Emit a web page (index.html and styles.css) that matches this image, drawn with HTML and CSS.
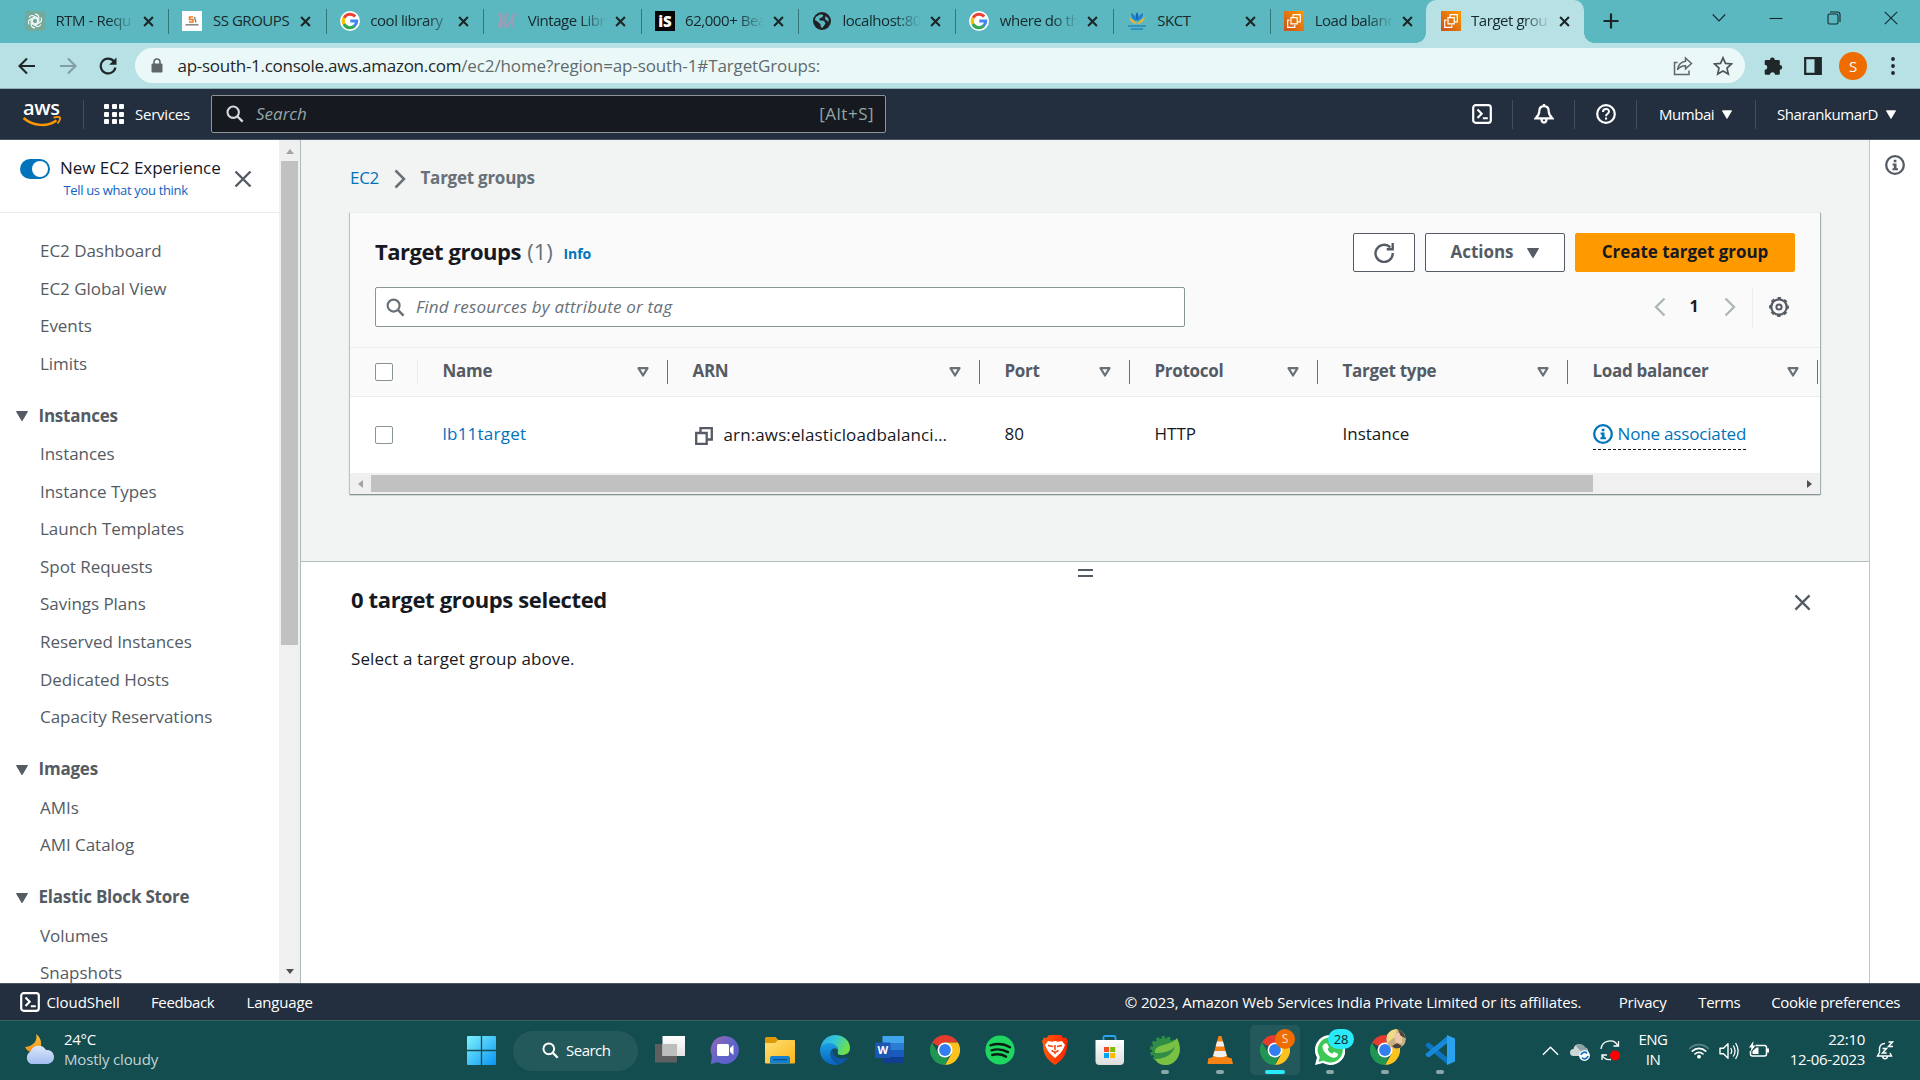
FILE: index.html
```
<!DOCTYPE html>
<html lang="en">
<head>
<meta charset="utf-8">
<title>Target groups | EC2</title>
<link rel="stylesheet" href="styles.css">
</head>
<body>
<svg class="defs" width="0" height="0">
  <defs>
    <linearGradient id="g-aws" x1="0" y1="1" x2="1" y2="0"><stop offset="0" stop-color="#c8511b"/><stop offset="1" stop-color="#f90"/></linearGradient>
    <linearGradient id="g-win" x1="0" y1="0" x2="1" y2="1"><stop offset="0" stop-color="#7df3fb"/><stop offset="1" stop-color="#0a94f5"/></linearGradient>
    <linearGradient id="g-chat" x1="0" y1="0" x2="1" y2="1"><stop offset="0" stop-color="#9a68b0"/><stop offset=".5" stop-color="#6264c9"/><stop offset="1" stop-color="#5b5bd0"/></linearGradient>
    <linearGradient id="g-folder" x1="0" y1="0" x2="1" y2="1"><stop offset="0" stop-color="#ffe07a"/><stop offset="1" stop-color="#f9b613"/></linearGradient>
    <linearGradient id="g-edge1" x1="0" y1="0" x2="1" y2=".4"><stop offset="0" stop-color="#2fa9ea"/><stop offset=".5" stop-color="#31c6d8"/><stop offset="1" stop-color="#6fe04c"/></linearGradient>
    <linearGradient id="g-edge2" x1="0" y1="0" x2="0" y2="1"><stop offset="0" stop-color="#1aa0e3"/><stop offset="1" stop-color="#0a63bd"/></linearGradient>
    <linearGradient id="g-brave" x1="0" y1="0" x2="1" y2="0"><stop offset="0" stop-color="#ff5a0a"/><stop offset="1" stop-color="#ff2400"/></linearGradient>
    <linearGradient id="g-bag" x1="0" y1="0" x2="0" y2="1"><stop offset="0" stop-color="#fff"/><stop offset="1" stop-color="#dcdcdc"/></linearGradient>
    <linearGradient id="g-moon" x1="0" y1="0" x2="0" y2="1"><stop offset="0" stop-color="#f8c53b"/><stop offset="1" stop-color="#ee8d20"/></linearGradient>
    <linearGradient id="g-cloud" x1="0" y1="0" x2="0" y2="1"><stop offset="0" stop-color="#dce8fb"/><stop offset="1" stop-color="#a3bdf0"/></linearGradient>
    <linearGradient id="g-white" x1="0" y1="0" x2="0" y2="1"><stop offset="0" stop-color="#fff"/><stop offset="1" stop-color="#e3e3e3"/></linearGradient>
    <symbol id="i-x" viewBox="0 0 10 10"><path d="M1 1l8 8M9 1L1 9" fill="none" stroke="currentColor" stroke-width="1.9"/></symbol>
    <symbol id="i-xbig" viewBox="0 0 18 18"><path d="M1.5 1.5l15 15M16.500 1.500L1.500 16.500" fill="none" stroke="currentColor" stroke-width="2.4"/></symbol>
    <symbol id="i-google" viewBox="0 0 20 20"><circle cx="10" cy="10" r="10" fill="#fff"/><g fill="none" stroke-width="3.100"><path d="M15.200 5.600A6.700 6.700 0 0 0 4.100 6.900" stroke="#ea4335"/><path d="M4.100 6.800A6.700 6.700 0 0 0 4.100 13.200" stroke="#fbbc05"/><path d="M4 13A6.700 6.700 0 0 0 14.500 15" stroke="#34a853"/><path d="M14.300 15.100A6.700 6.700 0 0 0 16.700 10H10.300" stroke="#4285f4"/></g></symbol>
    <symbol id="i-ec2" viewBox="0 0 20 20"><path d="M0 0h20v20H0z" fill="url(#g-aws)"/><g fill="none" stroke="#fff" stroke-width="1.200"><path d="M9 3.600h7.300v7.300h-2.600M9 3.600v2.500M7 6.600h6.200v6.200H7zM5.600 9.200H3.700v7.100h7.100v-2.300"/></g></symbol>
    <symbol id="i-search" viewBox="0 0 20 20"><circle cx="8" cy="8" r="6.300" fill="none" stroke="currentColor" stroke-width="2.300"/><path d="M12.500 12.500l6 6" stroke="currentColor" stroke-width="2.600"/></symbol>
    <symbol id="i-shell" viewBox="0 0 20 20"><rect x="1.200" y="1.200" width="17.600" height="17.600" rx="2.500" fill="none" stroke="currentColor" stroke-width="2.200"/><path d="M5.500 5.500l4.200 4.300-4.200 4.300M10.800 14.200h5" fill="none" stroke="currentColor" stroke-width="2.100"/></symbol>
    <symbol id="i-info" viewBox="0 0 20 20"><circle cx="10" cy="10" r="8.800" fill="none" stroke="currentColor" stroke-width="2.300"/><path d="M8.700 4.800h2.700v2.500H8.700zM7.600 8.600h3.900v4.700h1.500v1.900H7.400v-1.900h1.400v-2.800H7.600z" fill="currentColor"/></symbol>
    <symbol id="i-tri" viewBox="0 0 12 10"><path d="M.5.5h11L6 9.800z" fill="currentColor" stroke="currentColor" stroke-linejoin="round"/></symbol>
    <symbol id="i-sort" viewBox="0 0 12 10"><path d="M1.500 1.200h9L6 8.500z" fill="none" stroke="currentColor" stroke-width="2.200" stroke-linejoin="round"/></symbol>
    <symbol id="i-chrome" viewBox="0 0 30 30"><path d="M15 0A15 15 0 0 1 28 7.500H15L8.500 11.300 2 7.500A15 15 0 0 1 15 0z" fill="#e33b2e"/><path d="M28 7.500A15 15 0 0 1 15 30L21.500 18.800 15 7.500z" fill="#fcc31e"/><path d="M15 30A15 15 0 0 1 2 7.500L8.500 18.800 15 22.500l3.500-.5z" fill="#219653"/><circle cx="15" cy="15" r="7.500" fill="#fff"/><circle cx="15" cy="15" r="5.900" fill="#317ef0"/></symbol>
  </defs>
</svg>

<header class="tabstrip">
  <div class="tab"><svg class="fav" viewBox="0 0 20 20"><rect width="20" height="20" rx="3" fill="#74aa9c"/><g fill="none" stroke="#fff" stroke-width="1.100"><path id="petal" d="M10 3.200a3.400 3.400 0 0 1 3.800 3.300v4.300L10.300 13"/><use href="#petal" transform="rotate(60 10 10)"/><use href="#petal" transform="rotate(120 10 10)"/><use href="#petal" transform="rotate(180 10 10)"/><use href="#petal" transform="rotate(240 10 10)"/><use href="#petal" transform="rotate(300 10 10)"/></g></svg><span class="title fade">RTM - Requ</span><svg class="close"><use href="#i-x"/></svg></div>
  <div class="tab"><svg class="fav" viewBox="0 0 20 20"><path d="M0 0h20v20H0z" fill="#fff"/><path d="M11 6H7.500v2.500H11V11H7" fill="none" stroke="#f07b1d" stroke-width="1.500"/><path d="M12.500 6l1.500 5.500" stroke="#777" stroke-width="1.200"/><path d="M3.500 13.800h13" stroke="#8f8a85" stroke-width="1.600"/></svg><span class="title">SS GROUPS</span><svg class="close"><use href="#i-x"/></svg></div>
  <div class="tab"><svg class="fav"><use href="#i-google"/></svg><span class="title fade-soft">cool library</span><svg class="close"><use href="#i-x"/></svg></div>
  <div class="tab"><svg class="fav" viewBox="0 0 20 20"><path d="M2 3.500C5 2 5.500 4 3.500 9c-1 3-1.500 6-1 7.500C6 13 8 7 9.500 3 8 8 7 13 8.500 16.500 12 14 15 8 17.500 2.500c-2 5-3 10-1.500 13" fill="none" stroke="#9a9eb6" stroke-width="2.300" stroke-linecap="round" stroke-linejoin="round"/></svg><span class="title fade">Vintage Libr</span><svg class="close"><use href="#i-x"/></svg></div>
  <div class="tab"><svg class="fav" viewBox="0 0 20 20"><path d="M0 0h20v20H0z" fill="#050505"/><text x="10" y="16" text-anchor="middle" class="fav-is">iS</text></svg><span class="title fade">62,000+ Bea</span><svg class="close"><use href="#i-x"/></svg></div>
  <div class="tab"><svg class="fav" viewBox="0 0 20 20"><circle cx="10" cy="10" r="9" fill="#202124"/><path d="M4 5.500c2 .3 2-2 5-2.300l2.500 1L10 6.500l-2.500.8v2.200l4.500.3 1.500 2.700-3 4.300c-1.500.3-2-1.500-2-3.500L5.500 10.500 2.800 9z" fill="#5bb8c1"/><path d="M13.500 5l3 2.500v3.500l-3.500-3z" fill="#5bb8c1"/></svg><span class="title fade">localhost:80</span><svg class="close"><use href="#i-x"/></svg></div>
  <div class="tab"><svg class="fav"><use href="#i-google"/></svg><span class="title fade">where do th</span><svg class="close"><use href="#i-x"/></svg></div>
  <div class="tab"><svg class="fav" viewBox="0 0 20 20"><path d="M10 1c2 3 2 6 0 9-2-3-2-6 0-9z" fill="#1266b4"/><path d="M4 2c3 1 5 4 5.500 8C6 9 4 6 4 2zM16 2c-3 1-5 4-5.500 8C14 9 16 6 16 2z" fill="#1a80cf"/><path d="M2 6c1 4 4 7 8 7s7-3 8-7c-2 2-5 3-8 7-3-4-6-5-8-7z" fill="#f5b32b"/><path d="M1 15h18M4 18h12" stroke="#2487bb" stroke-width="1.600"/></svg><span class="title">SKCT</span><svg class="close"><use href="#i-x"/></svg></div>
  <div class="tab no-sep"><svg class="fav"><use href="#i-ec2"/></svg><span class="title fade">Load balanc</span><svg class="close"><use href="#i-x"/></svg></div>
  <div class="tab active"><svg class="fav"><use href="#i-ec2"/></svg><span class="title fade">Target grou</span><svg class="close"><use href="#i-x"/></svg></div>
  <svg class="new-tab" viewBox="0 0 16 16"><path d="M8 .5v15M.5 8h15" stroke="#1d2526" stroke-width="2.200"/></svg>
  <div class="win-controls">
    <svg viewBox="0 0 14 14"><path d="M.8 3.500L7 10l6.200-6.500"/></svg>
    <svg viewBox="0 0 14 14"><path d="M.5 7.500h13"/></svg>
    <svg viewBox="0 0 14 14"><rect x="1" y="3" width="10" height="10" rx="1.500"/><path d="M3 1h7.500a2.500 2.500 0 0 1 2.500 2.500V11"/></svg>
    <svg viewBox="0 0 14 14"><path d="M.8.800l12.400 12.400M13.200.800L.8 13.200"/></svg>
  </div>
</header>

<div class="toolbar">
  <svg class="nav-btn" viewBox="0 0 18 18"><path d="M17 9H2M9 1.500L1.500 9 9 16.500" fill="none" stroke="#1f2728" stroke-width="2.100"/></svg>
  <svg class="nav-btn" viewBox="0 0 18 18"><path d="M1 9h15M9 1.500L16.500 9 9 16.500" fill="none" stroke="#7f9fa3" stroke-width="2.100"/></svg>
  <svg class="nav-btn" viewBox="0 0 18 18"><path d="M15 4.500A7.400 7.400 0 1 0 16.400 10.500" fill="none" stroke="#1f2728" stroke-width="2.200"/><path d="M17.500.500v7.300h-7.300z" fill="#1f2728"/></svg>
  <div class="omnibox">
    <svg class="lock" viewBox="0 0 12 15"><path d="M3 6V4a3 3 0 0 1 6 0v2" fill="none" stroke="#5f6668" stroke-width="1.600"/><rect x=".5" y="5.500" width="11" height="9" rx="1.200" fill="#5f6668"/></svg>
    <span class="url"><span class="host">ap-south-1.console.aws.amazon.com</span>/ec2/home?region=ap-south-1#TargetGroups:</span>
    <svg class="omni-icon" viewBox="0 0 20 20"><path d="M4.500 6.500H1.500v12h14.500v-4M12.500 2l6 5.500-6 5.300v-3c-4 0-6 1.200-8 4 .8-5 3.500-8 8-8.500z" fill="none" stroke="#5f6668" stroke-width="1.500"/></svg>
    <svg class="omni-icon" viewBox="0 0 20 20"><path d="M10 1.800l2.500 5.600 6 .6-4.500 4.100 1.300 6L10 15l-5.300 3.100 1.300-6L1.500 8l6-.6z" fill="none" stroke="#4f5658" stroke-width="1.700"/></svg>
  </div>
  <svg class="ext" viewBox="0 0 20 20"><path d="M7 4a2.400 2.400 0 0 1 4.800 0h3.700q1.300 0 1.300 1.300V9a2.400 2.400 0 0 1 0 4.800v3.700q0 1.300-1.300 1.300H12a2.500 2.500 0 0 0-5 0H3q-1.300 0-1.300-1.300v-3.800a2.500 2.500 0 0 0 0-5V5.300Q1.700 4 3 4z" fill="#1f2728"/></svg>
  <svg class="panel-ic" viewBox="0 0 18 18"><path d="M1.200 1.200h15.600v15.600H1.200z" fill="none" stroke="#1f2728" stroke-width="2.200"/><path d="M10.500 1h6.500v16h-6.500z" fill="#1f2728"/></svg>
  <span class="avatar">S</span>
  <svg class="dots" viewBox="0 0 4 18"><circle cx="2" cy="2" r="1.900"/><circle cx="2" cy="9" r="1.900"/><circle cx="2" cy="16" r="1.900"/></svg>
</div>

<nav class="awsnav">
  <svg class="aws-logo" viewBox="0 0 40 28"><text x="19.500" y="15" text-anchor="middle" class="aws-word" textLength="37">aws</text><path d="M1.500 18c10 8.500 24 9 33 2.500" fill="none" stroke="#f90" stroke-width="2.500"/><path d="M31.500 17.700c3-.9 6-1 6.500-.2s-.5 3.800-2.500 6" fill="none" stroke="#f90" stroke-width="1.800"/></svg>
  <i class="vsep"></i>
  <span class="services"><span class="grid9"><i></i><i></i><i></i><i></i><i></i><i></i><i></i><i></i><i></i></span>Services</span>
  <div class="aws-search"><svg><use href="#i-search"/></svg><em>Search</em><span>[Alt+S]</span></div>
  <div class="nav-right">
    <svg class="n20"><use href="#i-shell"/></svg><i class="vsep"></i>
    <svg class="n20" viewBox="0 0 20 20"><path d="M10 2.200c-3.500 0-4.700 2.500-4.700 5C5.300 10 4 12 1.700 14.300h16.600C16 12 14.700 10 14.700 7.200c0-2.500-1.200-5-4.700-5zM10 0v3M7.500 15c0 4.700 5 4.700 5 0" fill="none" stroke="#fff" stroke-width="2.200"/></svg><i class="vsep"></i>
    <svg class="n20" viewBox="0 0 20 20"><circle cx="10" cy="10" r="8.800" fill="none" stroke="#fff" stroke-width="2.200"/><path d="M7 8c0-4 6-4 6-.4 0 2.200-3 2.200-3 4.600" fill="none" stroke="#fff" stroke-width="2"/><path d="M9 13.500h2.100v2.100H9z" fill="#fff"/></svg><i class="vsep"></i>
    <span class="menu region">Mumbai<svg><use href="#i-tri"/></svg></span><i class="vsep"></i>
    <span class="menu account">SharankumarD<svg><use href="#i-tri"/></svg></span>
  </div>
</nav>

<main class="console">
  <aside class="sidebar">
    <div class="side-body">
      <div class="experience">
        <span class="toggle"><i></i></span>
        <div class="exp-text"><b>New EC2 Experience</b><a>Tell us what you think</a></div>
        <svg class="x18"><use href="#i-xbig"/></svg>
      </div>
      <ul class="links first"><li>EC2 Dashboard</li><li>EC2 Global View</li><li>Events</li><li>Limits</li></ul>
      <h4><svg><use href="#i-tri"/></svg>Instances</h4>
      <ul class="links"><li>Instances</li><li>Instance Types</li><li>Launch Templates</li><li>Spot Requests</li><li>Savings Plans</li><li>Reserved Instances</li><li>Dedicated Hosts</li><li>Capacity Reservations</li></ul>
      <h4><svg><use href="#i-tri"/></svg>Images</h4>
      <ul class="links"><li>AMIs</li><li>AMI Catalog</li></ul>
      <h4><svg><use href="#i-tri"/></svg>Elastic Block Store</h4>
      <ul class="links"><li>Volumes</li><li>Snapshots</li></ul>
    </div>
    <div class="vscroll"><i class="up"></i><i class="vthumb"></i><i class="down"></i></div>
  </aside>

  <section class="content">
    <div class="upper">
      <div class="crumbs"><a>EC2</a><svg viewBox="0 0 12 20"><path d="M1.500 1.500L10 10l-8.500 8.500" fill="none" stroke="#687078" stroke-width="2.500"/></svg><b>Target groups</b></div>
      <div class="card">
        <div class="card-head">
          <div class="row-title">
            <h1>Target groups <span>(1)</span></h1><a class="info">Info</a>
            <div class="actions">
              <button class="btn refresh"><svg viewBox="0 0 20 20"><path d="M16.300 4.400A8.600 8.600 0 1 0 18.700 10" fill="none" stroke="#545b64" stroke-width="2.400"/><path d="M18.700 0v6.300h-6" fill="none" stroke="#545b64" stroke-width="2.400"/></svg></button>
              <button class="btn act">Actions<svg><use href="#i-tri"/></svg></button>
              <button class="btn primary">Create target group</button>
            </div>
          </div>
          <div class="row-filter">
            <div class="filter"><svg><use href="#i-search"/></svg><em>Find resources by attribute or tag</em></div>
            <div class="pager">
              <svg class="pg" viewBox="0 0 12 20"><path d="M10.500 1.500L2 10l8.500 8.500" fill="none" stroke="#aab7b8" stroke-width="2.300"/></svg>
              <span>1</span>
              <svg class="pg" viewBox="0 0 12 20"><path d="M1.500 1.500L10 10l-8.500 8.500" fill="none" stroke="#aab7b8" stroke-width="2.300"/></svg>
              <i class="psep"></i>
              <svg class="gear" viewBox="0 0 20 20"><circle cx="10" cy="10" r="7.700" fill="none" stroke="#545b64" stroke-width="2.200"/><circle cx="10" cy="10" r="8.900" fill="none" stroke="#545b64" stroke-width="2" stroke-dasharray="3.500 3.490" stroke-dashoffset="1.750"/><circle cx="10" cy="10" r="2.600" fill="none" stroke="#545b64" stroke-width="2"/></svg>
            </div>
          </div>
        </div>
        <div class="trow thead">
          <div class="th ck"><i class="box"></i></div>
          <div class="th">Name<svg><use href="#i-sort"/></svg></div>
          <div class="th">ARN<svg><use href="#i-sort"/></svg></div>
          <div class="th">Port<svg><use href="#i-sort"/></svg></div>
          <div class="th">Protocol<svg><use href="#i-sort"/></svg></div>
          <div class="th">Target type<svg><use href="#i-sort"/></svg></div>
          <div class="th">Load balancer<svg><use href="#i-sort"/></svg></div>
        </div>
        <div class="trow tbody">
          <div class="td ck"><i class="box"></i></div>
          <div class="td"><a class="tg">lb11target</a></div>
          <div class="td arn"><svg viewBox="0 0 18 18"><path d="M1.200 6h10.500v10.800H1.200z" fill="none" stroke="#545b64" stroke-width="2.300"/><path d="M5.500 5V1.200h11.300V12.500H12.500" fill="none" stroke="#545b64" stroke-width="2.300"/></svg>arn:aws:elasticloadbalanci…</div>
          <div class="td">80</div>
          <div class="td">HTTP</div>
          <div class="td">Instance</div>
          <div class="td"><a class="none"><svg><use href="#i-info"/></svg>None associated</a></div>
        </div>
        <div class="hscroll"><i class="left"></i><i class="hthumb"></i><i class="right"></i></div>
      </div>
    </div>
    <div class="split">
      <div class="handle"><i></i><i></i></div>
      <div class="split-head"><h2>0 target groups selected</h2><svg class="x16"><use href="#i-xbig"/></svg></div>
      <p>Select a target group above.</p>
    </div>
  </section>
  <aside class="help"><svg><use href="#i-info"/></svg></aside>
</main>

<footer class="awsfoot">
  <svg class="n20"><use href="#i-shell"/></svg><span class="f-shell">CloudShell</span><span class="f-feed">Feedback</span><span class="f-lang">Language</span>
  <span class="f-copy">© 2023, Amazon Web Services India Private Limited or its affiliates.</span><span class="f-priv">Privacy</span><span class="f-terms">Terms</span><span class="f-cookie">Cookie preferences</span>
</footer>

<div class="taskbar">
  <div class="weather">
    <svg viewBox="0 0 31 31"><path d="M12 0c2 6-2 12-11 13 2 5 8 7 13 4 5-4 4-13-2-17z" fill="url(#g-moon)"/><path d="M7 30a7 7 0 0 1-.5-12.500A8.500 8.500 0 0 1 22 16a7 7 0 0 1 2 14z" fill="url(#g-cloud)"/></svg>
    <div><span>24°C</span><span class="dim">Mostly cloudy</span></div>
  </div>
  <div class="dock">
    <svg class="start" viewBox="0 0 30 30"><path d="M0 1q0-1 1-1h13.300v14.300H0zM15.700 0H29q1 0 1 1v13.300H15.700zM0 15.700h14.300V30H1q-1 0-1-1zM15.700 15.700H30V29q0 1-1 1H15.700z" fill="url(#g-win)"/></svg>
    <div class="pill"><svg><use href="#i-search"/></svg><span>Search</span></div>
    <div class="apps">
      <span class="app"><svg viewBox="0 0 30 30"><path d="M0 9h22v18.500H0z" fill="#5e6060"/><path d="M7.500 1H30v20H7.500z" fill="url(#g-white)"/><path d="M7.500 9H22v12H7.500z" fill="#bdbdbd"/></svg></span>
      <span class="app"><svg viewBox="0 0 30 30"><path d="M15 1a14 14 0 1 1-7 26.200L.8 29 2 21A14 14 0 0 1 15 1z" fill="url(#g-chat)"/><rect x="7" y="9" width="12" height="12" rx="1.500" fill="#fff"/><path d="M20 13l3.500-3v10L20 17z" fill="#fff"/></svg></span>
      <span class="app"><svg viewBox="0 0 30 30"><path d="M0 3.500Q0 2 1.500 2h9l3 3H30v9H0z" fill="#dc9a05"/><path d="M0 8h10l3-3h15.500Q30 5 30 6.500v21q0 1-1 1H1q-1 0-1-1z" fill="url(#g-folder)"/><path d="M5 28.500V23q0-2 2-2h16q2 0 2 2v5.500z" fill="#1380d0"/><path d="M9 24.700h12.500" stroke="#0b4f93" stroke-width="1.300" stroke-linecap="round"/></svg></span>
      <span class="app"><svg viewBox="0 0 30 30"><path d="M.5 13C2 5 8 0 15 0c9 0 15 6 15 13 0 5-4 7-8 7-4 0-5-1.500-4-3.500 1-3-1.500-6.500-6-6.500S2 11 .5 13z" fill="url(#g-edge1)"/><path d="M0 15C0 10 5 8 9.500 8c5 0 9 4 8.500 8-.3-2-3-4-5.500-2-4 3-2 12 7 15.300C9 32 0 25 0 15z" fill="url(#g-edge2)"/><path d="M12.500 14c-4 3-3 12.500 7 15.300 4-1 7-4 8.500-6.800-6 2.500-12.500.5-14.500-3.500-.8-2-.8-3.500-1-5z" fill="#0d57a6"/></svg></span>
      <span class="app"><svg viewBox="0 0 30 30"><path d="M7.500 1H29v7H7.500z" fill="#41a5ee"/><path d="M7.500 8H29v7H7.500z" fill="#2b7cd3"/><path d="M7.500 15H29v7H7.500z" fill="#185abd"/><path d="M7.500 22H29v6H7.500z" fill="#103f91"/><rect x="0" y="7.500" width="15.500" height="15.500" rx="1.200" fill="#1b56b5"/><text x="7.700" y="19" text-anchor="middle" class="w-letter">W</text></svg></span>
      <span class="app"><svg><use href="#i-chrome"/></svg></span>
      <span class="app"><svg viewBox="0 0 30 30"><circle cx="15" cy="15" r="14.600" fill="#1ed760"/><path d="M5.500 10.300c6.500-2 14-1.300 19.500 2M6.500 15.300c5.500-1.600 12-.8 16.500 1.800M7.200 20c4.800-1.300 9.800-.7 13.800 1.600" fill="none" stroke="#0b1d12" stroke-width="2.400" stroke-linecap="round"/></svg></span>
      <span class="app"><svg viewBox="0 0 30 30"><path d="M9 0h12l2.500 3 2.500-.5 2 3.500-1 4c0 8-3 14-12 20C6 24 3 18 3 10L2 6l2-3.500 2.500.5z" fill="url(#g-brave)"/><path d="M8 6l4 .8L15 6l3 .8L22 6l3 4-2 4.500-2.500 3.500L15 23l-5.500-5L7 14.500 5 10z" fill="#fff"/><path d="M8 10.500l5 1M22 10.500l-5 1M15 10v5M11.500 15.500L15 17.500l3.500-2M15 17.500V19" stroke="#ff3d05" stroke-width="1.500" fill="none"/></svg></span>
      <span class="app"><svg viewBox="0 0 30 30"><path d="M8.500 6V2.500Q8.500 1 10 1h9q1.500 0 1.500 1.500V6" fill="none" stroke="#2ba3ea" stroke-width="1.800"/><path d="M.5 5h28.500v21q0 4-4 4H4.500q-4 0-4-4z" fill="url(#g-bag)"/><path d="M9 12h5v5H9z" fill="#f25022"/><path d="M15.200 12h5v5h-5z" fill="#7fba00"/><path d="M9 18h5v5H9z" fill="#00a4ef"/><path d="M15.200 18h5v5h-5z" fill="#ffb900"/></svg></span>
      <span class="app run"><svg viewBox="0 0 30 30"><circle cx="14" cy="15" r="12.500" fill="none" stroke="#2f8d46" stroke-width="3" stroke-dasharray="3.300 2.310"/><circle cx="14" cy="15" r="12" fill="#2f8d46"/><path d="M27 3c5 9 4 21-6 26-6 2.500-14 .5-16-5 6 0 17-2 20-13-4 6-12 7-20 7C4 8 20 12 27 3z" fill="#7ac143"/></svg></span>
      <span class="app run"><svg viewBox="0 0 30 30"><path d="M6.500 22L4 29h22l-2.500-7z" fill="#e8780a"/><path d="M3.500 23h23L28 29H2.500z" fill="#f58212"/><path d="M13.500 1h3L22.500 23q-7.500 4-15 0z" fill="#f58212"/><path d="M12 6.500h6l1.300 5h-8.600zM9.500 16h11l1.400 4.700q-6.900 3-13.800 0z" fill="#f0f0f0"/></svg></span>
      <span class="app run current"><svg><use href="#i-chrome"/></svg><b class="badge user">S</b></span>
      <span class="app run"><svg viewBox="0 0 30 30"><path d="M15 0a15 15 0 1 1-7 28L0 30l2-7.500A15 15 0 0 1 15 0z" fill="#fff"/><path d="M15 2.500a12.500 12.500 0 1 1-6.500 23L3.500 27l1.300-5A12.500 12.500 0 0 1 15 2.500z" fill="#3dc755"/><path d="M10 8.500l2-.3 2 4-1.500 2c1 2.200 2.500 3.500 4.700 4.500l1.800-2 4 2c.3 3-2.500 4-4.500 4C13 22 7.500 16 7.500 12c0-1.500 1-3 2.500-3.500z" fill="#fff"/></svg><b class="badge count">28</b></span>
      <span class="app run"><svg><use href="#i-chrome"/></svg><svg class="badge pic" viewBox="0 0 20 20"><circle cx="10" cy="10" r="10" fill="#c9b184"/><path d="M1 6Q5 0 11 0L9 8l-8 6z" fill="#efdc83"/><path d="M8 5q6-3 8 2v7l-6 1z" fill="#ecc8a8"/><path d="M12 .500q6.500 2 7.500 9l-5-3zM6 17l5-3 5 3q-5 5-10 0z" fill="#4b443d"/></svg></span>
      <span class="app run"><svg viewBox="0 0 30 30"><path d="M1 9l3-1.500L24 24l-1.500 5.500L.5 11z" fill="#0d74c0"/><path d="M1 21l3 1.500L23 7.500V.5L.5 19z" fill="#1789d6"/><path d="M22 0l8 3.500v23L22 30z" fill="#2aa3ef"/></svg></span>
    </div>
  </div>
  <div class="tray">
    <svg class="t-up" viewBox="0 0 18 10"><path d="M1 9l8-8 8 8" fill="none" stroke="#fff" stroke-width="1.500"/></svg>
    <svg class="t-cloud" viewBox="0 0 20 18"><path d="M3.500 13a3.500 3.500 0 0 1 0-7A5.500 5.500 0 0 1 14 4.500a4.300 4.300 0 0 1 1 8.500z" fill="#cfd6d6"/><path d="M6 3a5.500 5.500 0 0 1 9.500 2q2.500 1 2.300 3.500H11z" fill="#8fa3a4"/><circle cx="14.500" cy="12.500" r="5.400" fill="#fff"/><path d="M11 12a3.500 3.500 0 0 1 6-1.700M18 13a3.500 3.500 0 0 1-6 1.700" fill="none" stroke="#1273c8" stroke-width="1.700"/></svg>
    <svg class="t-sync" viewBox="0 0 20 21"><path d="M1 9a9 9 0 0 1 17-3M18.500 1v5h-5M2 20v-5h5M2 15c2 4 6 5 9 4.500" fill="none" stroke="#fff" stroke-width="1.300"/><circle cx="15" cy="15.500" r="5" fill="#f00"/></svg>
    <div class="lang"><span>ENG</span><span>IN</span></div>
    <svg class="t-wifi" viewBox="0 0 20 16"><g fill="none" stroke="#fff" stroke-width="1.700" stroke-linecap="round"><path d="M.8 5.500a13 13 0 0 1 18.400 0" stroke="#5b8487"/><path d="M3.300 8.200a9.500 9.500 0 0 1 13.400 0M6 11a5.700 5.700 0 0 1 8 0"/></g><circle cx="10" cy="13.700" r="1.900" fill="#fff"/></svg>
    <svg class="t-vol" viewBox="0 0 20 18"><path d="M1 6.200h3.500L9 1.800v14.400L4.500 11.800H1z" fill="none" stroke="#fff" stroke-width="1.400" stroke-linejoin="round"/><path d="M11.700 6q2 3 0 6M14.200 3.500q3.700 5.500 0 11M16.600 1q5 8 0 16" fill="none" stroke="#fff" stroke-width="1.300"/></svg>
    <svg class="t-bat" viewBox="0 0 20 17"><path d="M6.500 4.500h9q2 0 2 2V13q0 2-2 2h-12q-2 0-2-2v-3" fill="none" stroke="#fff" stroke-width="1.500"/><path d="M18 7.500h2v4h-2z" fill="#fff"/><path d="M7.500 6.500h2v6.500h-6v-3zM4.500 0L0 6.500h2.500L1.500 11 6.500 4.500H4z" fill="#fff"/></svg>
    <div class="clock"><span>22:10</span><span>12-06-2023</span></div>
    <svg class="t-bell" viewBox="0 0 18 19"><path d="M9 2.500c-4 0-5.500 2.500-5.500 6v3L1.500 15h14l-1.500-3M6.500 15.500c.5 3 4.500 3 5 0" fill="none" stroke="#fff" stroke-width="1.400"/><path d="M6.500 7.500h4l-4 4.500h4.200M12.500 1h4l-4 4.500H17" fill="none" stroke="#fff" stroke-width="1.500"/></svg>
  </div>
</div>
</body>
</html>
```
FILE: styles.css
```
* { box-sizing: border-box; }
body { margin: 0; width: 1920px; height: 1080px; overflow: hidden; display: flex; flex-direction: column; font-family: "Open Sans", "Noto Sans", sans-serif; font-size: 17px; color: #16191f; background: #fff; }
i { font-style: normal; display: block; }
svg { flex: none; display: block; }
ul, h1, h2, h4, p { margin: 0; padding: 0; list-style: none; font-weight: 400; }
.defs { position: absolute; }

/* browser tabs */
.tabstrip { height: 43px; flex: none; background: #5bb8c1; display: flex; align-items: center; padding-left: 11px; color: #16282b; }
.tab { width: 157.4px; height: 43px; flex: none; display: flex; align-items: center; padding: 0 0 1px 14px; position: relative; }
.tab::after { content: ""; position: absolute; right: -1px; top: 9px; width: 1px; height: 25px; background: #37757c; }
.tab.no-sep::after, .tab.active::after { display: none; }
.tab.active { background: #b7e1e4; border-radius: 10px 10px 0 0; margin: 0 0 0 -1.500px; width: 158px; padding-left: 14.500px; }
.tab.active::before { content: ""; position: absolute; left: -10px; right: -10px; bottom: 0; height: 10px; background: radial-gradient(circle at 0 0, transparent 9.500px, #b7e1e4 10px) left / 10px 10px no-repeat, radial-gradient(circle at 100% 0, transparent 9.500px, #b7e1e4 10px) right / 10px 10px no-repeat; }
.fav { width: 20px; height: 20px; }
.fav-is { font: 800 15px "Open Sans", sans-serif; fill: #fff; }
.title { width: 79px; margin-left: 10.500px; overflow: hidden; white-space: nowrap; font-size: 15px; letter-spacing: -.45px; position: relative; top: -1px; }
.fade { -webkit-mask-image: linear-gradient(90deg, #000 66%, transparent 100%); mask-image: linear-gradient(90deg, #000 66%, transparent 100%); }
.fade-soft { -webkit-mask-image: linear-gradient(90deg, #000 72%, rgba(0,0,0,.2) 100%); mask-image: linear-gradient(90deg, #000 72%, rgba(0,0,0,.2) 100%); }
.close { width: 11px; height: 11px; margin-left: 8.500px; color: #1d2526; }
.new-tab { width: 16px; height: 16px; margin-left: 19px; margin-top: -1px; }
.win-controls { display: flex; gap: 43.500px; margin: -7px 22px 0 auto; }
.win-controls svg { width: 14px; height: 14px; fill: none; stroke: #14282b; stroke-width: 1.100; }

/* address bar */
.toolbar { height: 46px; flex: none; background: #b7e1e4; border-bottom: 1px solid #8fb0b5; display: flex; align-items: center; padding: 0 25px 0 18px; }
.nav-btn { width: 18px; height: 18px; margin-right: 22.500px; }
.omnibox { width: 1610px; height: 35px; border-radius: 18px; background: #ebf8f8; display: flex; align-items: center; padding: 0 12px 0 16px; margin-left: -4.500px; }
.lock { width: 12px; height: 15px; }
.url { margin-left: 14.500px; font-size: 17px; letter-spacing: -.12px; color: #5f6b6d; flex: 1; white-space: nowrap; margin-top: -1px; }
.host { color: #1f2728; letter-spacing: -.27px; }
.omni-icon { width: 20px; height: 20px; margin-left: 20px; }
.ext { width: 20px; height: 20px; margin-left: 18px; }
.panel-ic { width: 18px; height: 18px; margin-left: 21px; }
.avatar { width: 28px; height: 28px; border-radius: 50%; background: #ef6c00; color: #fff; font-size: 15px; line-height: 28px; text-align: center; margin-left: 17px; }
.dots { width: 4px; height: 18px; margin-left: auto; fill: #1f2728; }

/* console navigation */
.awsnav { height: 51px; flex: none; background: #232f3e; border-bottom: 1px solid #4b5562; display: flex; align-items: center; padding: 0 24px 0 22px; color: #fff; font-size: 15px; font-weight: 500; }
.aws-logo { width: 40px; height: 28px; margin-top: -1px; overflow: visible; }
.aws-word { font: 600 20px "Open Sans", sans-serif; fill: #fff; }
.vsep { width: 1px; height: 29px; background: #414d5c; flex: none; }
.aws-logo + .vsep { margin-left: 21px; }
.services { display: flex; align-items: center; gap: 11px; margin-left: 20px; letter-spacing: -.23px; width: 107px; }
.grid9 { display: grid; grid-template-columns: repeat(3, 5px); gap: 2.500px; }
.grid9 i { height: 5px; background: #fff; border-radius: 1px; }
.aws-search { width: 675px; height: 38px; border: 1px solid #8c9596; border-radius: 2px; background: #16191f; display: flex; align-items: center; padding: 0 11px 0 14px; color: #95a5a6; font-size: 17px; font-weight: 400; }
.aws-search svg { width: 18px; height: 18px; color: #d5dbdb; }
.aws-search em { margin: -2px 0 0 12px; flex: 1; }
.aws-search span { letter-spacing: .49px; margin-top: -2px; }
.nav-right { display: flex; align-items: center; margin-left: auto; }
.n20 { width: 20px; height: 20px; color: #fff; }
.nav-right .n20 { margin: 0 20px 0 21.500px; }
.menu { display: flex; align-items: center; white-space: nowrap; }
.menu svg { width: 10px; height: 9px; margin-left: 8px; }
.region { width: 118px; padding-left: 21.500px; letter-spacing: -.45px; }
.nav-right .n20 + .vsep { margin-right: -.5px; }
.nav-right .n20:last-of-type + .vsep { margin-right: 0; }
.account { padding-left: 20.500px; letter-spacing: -.39px; }

/* console body */
.console { height: 843px; flex: none; display: flex; overflow: hidden; }
.sidebar { width: 301px; flex: none; display: flex; border-right: 1px solid #b0b9bb; overflow: hidden; }
.side-body { width: 279px; height: 843px; overflow: hidden; color: #545b64; letter-spacing: -.04px; }
.experience { height: 73px; border-bottom: 1px solid #eaeded; display: flex; padding: 0 28px 0 20px; align-items: center; }
.toggle { width: 30px; height: 20px; border-radius: 10px; background: #0073bb; display: flex; justify-content: flex-end; padding: 2px; align-self: flex-start; margin-top: 19px; }
.toggle i { width: 16px; height: 16px; border-radius: 50%; background: #fff; }
.exp-text { margin-left: 10px; flex: 1; align-self: flex-start; margin-top: 16px; white-space: nowrap; }
.exp-text b { display: block; font-weight: 400; color: #16191f; line-height: 24px; }
.exp-text a { display: block; margin: 0 0 0 3.500px; font-size: 13px; line-height: 20px; letter-spacing: -.34px; color: #0f62c4; }
.x18 { width: 18px; height: 18px; color: #545b64; margin: 5px -.5px 0 0; }
.links li { height: 37.550px; line-height: 37.550px; padding-left: 40px; white-space: nowrap; }
.links.first { margin-top: 19px; }
.side-body h4 { height: 38.500px; line-height: 38.500px; margin-top: 14.600px; display: flex; align-items: center; padding-left: 16px; font-weight: 700; letter-spacing: -.22px; }
.side-body h4 svg { width: 12px; height: 10px; margin-right: 10.500px; }
.vscroll { width: 21px; background: #f0f0f0; display: flex; flex-direction: column; align-items: center; padding: 9px 0 9px; }
.up { border: 4.500px solid transparent; border-bottom: 5px solid #a3a3a3; border-top: 0; }
.vthumb { width: 17px; height: 484px; margin-top: 7px; background: #c1c1c1; }
.down { border: 4.500px solid transparent; border-top: 5px solid #505050; border-bottom: 0; margin-top: auto; }
.content { flex: 1; display: flex; flex-direction: column; min-width: 0; }
.help { width: 51px; border-left: 1px solid #bfc6c7; padding: 15px 0 0 15px; }
.help svg { width: 20px; height: 20px; color: #545b64; }
.upper { height: 421px; background: #f2f3f3; padding: 26px 48px 0 49px; }
.crumbs { height: 22px; display: flex; align-items: center; font-size: 17px; }
.crumbs a { color: #0073bb; letter-spacing: -.29px; }
.crumbs svg { width: 12px; height: 20px; margin: 3px 15px 0 14.500px; }
.crumbs b { font-weight: 700; color: #687078; letter-spacing: -.25px; }
.card { margin: 24px 0 0; height: 282px; width: 1470px; background: #fff; border-top: 1px solid #eaeded; box-shadow: 0 1px 1px #879596, 1px 1px 1px #aab7b8, -1px 1px 1px #c5cdce; }
.card-head { height: 135px; padding: 20px 25px 0; background: #fafafa; border-bottom: 1px solid #eaeded; }
.row-title { display: flex; align-items: center; height: 39px; }
.row-title h1 { font-size: 22px; font-weight: 700; letter-spacing: -.47px; margin-top: -4px; }
.row-title h1 span { font-weight: 400; color: #687078; letter-spacing: -.05px; margin-left: 1px; }
.info { font-size: 14px; font-weight: 700; color: #0073bb; margin: 2px 0 0 11px; letter-spacing: -.15px; }
.actions { margin-left: auto; display: flex; gap: 10px; }
.btn { height: 39px; border: 1px solid #545b64; border-radius: 2px; background: #fff; color: #545b64; font: 700 17px "Open Sans", sans-serif; letter-spacing: -.04px; padding: 0 0 2px; display: flex; align-items: center; justify-content: center; }
.btn.refresh { width: 62px; padding: 0; }
.btn.refresh svg { width: 20px; height: 20px; }
.btn.act { width: 140px; gap: 14px; }
.btn.act svg { width: 12px; height: 10px; margin-top: 2px; }
.btn.primary { width: 220px; background: #f90; border-color: #f90; color: #16191f; }
.row-filter { display: flex; margin-top: 15px; justify-content: space-between; align-items: center; height: 40px; }
.filter { width: 810px; height: 40px; border: 1px solid #879596; border-radius: 2px; background: #fff; display: flex; align-items: center; padding-left: 10px; color: #687078; }
.filter svg { width: 19px; height: 19px; }
.filter em { margin: -2px 0 0 11px; letter-spacing: .19px; }
.pager { display: flex; align-items: center; font-size: 16px; font-weight: 700; }
.pager span { width: 58px; text-align: center; margin-top: -3px; }
.pg { width: 12px; height: 20px; position: relative; left: 1px; }
.psep { width: 1px; height: 40px; background: #eaeded; margin: 0 16px 0 17px; }
.gear { width: 20px; height: 20px; margin-right: 6px; }
.trow { display: grid; grid-template-columns: 68px 250px 312px 150px 188px 250px 250px; }
.thead { height: 49px; background: #fafafa; border-bottom: 1px solid #eaeded; color: #545b64; font-weight: 700; letter-spacing: -.3px; }
.th { display: flex; align-items: center; justify-content: space-between; padding: 0 19px 3px 24.500px; position: relative; }
.th svg { width: 12px; height: 10px; color: #687078; margin-top: 3px; }
.th::after { content: ""; position: absolute; right: 0; top: 12px; width: 1px; height: 24px; background: #687078; }
.th.ck::after { background: #eaeded; }
.ck { padding-left: 25px !important; }
.box { width: 18px; height: 18px; border: 1px solid #879596; border-radius: 2px; background: #fff; margin-top: 3px; }
.tbody { height: 76px; }
.td { display: flex; align-items: center; padding: 0 0 4px 24.500px; white-space: nowrap; }
.td .box { margin-top: 4px; }
.td a { color: #0073bb; }
.td .tg { letter-spacing: .23px; }
.td.arn { padding-left: 27px; letter-spacing: .12px; padding-bottom: 1px; }
.td.arn svg { width: 18px; height: 18px; margin: 2px 10.500px 0 0; }
.none { display: flex; align-items: center; gap: 5px; height: 30px; border-bottom: 1px dashed #16191f; letter-spacing: -.17px; padding-bottom: 1px; margin-top: 3px; }
.none svg { width: 20px; height: 20px; }
.hscroll { height: 21px; background: #f0f0f0; display: flex; align-items: center; padding: 0 8px; }
.left { border: 4.500px solid transparent; border-right: 5px solid #a3a3a3; border-left: 0; }
.hthumb { height: 17px; width: 1222px; margin-left: 8px; background: #c1c1c1; }
.right { border: 4.500px solid transparent; border-left: 5px solid #505050; border-right: 0; margin-left: auto; }
.split { flex: 1; border-top: 1px solid #b6bec0; background: #fff; padding: 7px 58px 0 50px; }
.handle { width: 15px; margin: 0 auto; display: grid; gap: 4px; position: relative; left: 4px; }
.handle i { height: 2px; background: #545b64; }
.split-head { display: flex; align-items: center; justify-content: space-between; margin-top: 7px; height: 32px; }
.split-head h2 { font-size: 22px; font-weight: 700; letter-spacing: -.35px; margin-top: -2px; }
.x16 { width: 17px; height: 17px; color: #545b64; margin-top: 4px; }
.split p { margin-top: 31px; line-height: 24px; letter-spacing: .09px; }

/* console footer */
.awsfoot { height: 37px; flex: none; background: #232f3e; border-top: 1px solid #4b5562; display: flex; align-items: center; color: #fff; font-size: 15px; font-weight: 500; padding: 0 20px; white-space: nowrap; }
.f-shell { margin-left: 6.500px; width: 104.500px; letter-spacing: -.08px; }
.f-feed { width: 95.500px; letter-spacing: -.38px; }
.f-lang { letter-spacing: -.18px; }
.f-copy { margin-left: auto; width: 494px; letter-spacing: -.12px; }
.f-priv { width: 79.500px; letter-spacing: -.25px; }
.f-terms { width: 73px; letter-spacing: -.4px; }
.f-cookie { letter-spacing: -.36px; }

/* desktop taskbar */
.taskbar { height: 60px; flex: none; background: #144d50; border-top: 1px solid #36645f; display: flex; align-items: center; color: #fff; font-size: 15px; letter-spacing: -.3px; padding-left: 24px; }
.weather { width: 443px; display: flex; }
.weather svg { width: 31px; height: 31px; margin-top: 3px; }
.weather div, .lang, .clock { display: flex; flex-direction: column; line-height: 20px; position: relative; top: -1.500px; }
.weather div { margin-left: 9px; top: -2px; }
.dim { color: #c3d3d4; letter-spacing: -.16px; }
.dock { display: flex; align-items: center; }
.start { width: 29px; height: 29px; }
.pill { width: 125px; height: 40px; border-radius: 20px; background: #24595c; margin: 0 4.500px 0 17px; padding-left: 29px; display: flex; align-items: center; gap: 7px; letter-spacing: -.5px; }
.pill span { margin-top: -2px; }
.pill svg { width: 17px; height: 17px; }
.apps { display: flex; }
.app { width: 50px; height: 50px; margin-right: 5px; display: flex; align-items: center; justify-content: center; position: relative; border-radius: 5px; left: 2.500px; top: -.5px; }
.app svg { width: 30px; height: 30px; }
.app.current { background: #24595c; }
.run::after { content: ""; position: absolute; left: 21px; bottom: 1px; width: 8px; height: 4px; border-radius: 2px; background: #8ca7a8; }
.current::after { left: 15px; width: 20px; background: #28eafa; }
.w-letter { font: 700 11px "Open Sans", sans-serif; fill: #fff; letter-spacing: 0; }
.badge { position: absolute; left: 25px; top: 4px; height: 20px; border-radius: 10px; line-height: 20px; text-align: center; font-weight: 400; }
.badge.user { width: 20px; background: #ef6c00; font-size: 12px; color: #fde0c8; }
.badge.count { left: 23px; width: 26px; background: #28eafa; color: #0b1f24; font-size: 13px; }
.app .badge.pic { left: 26px; width: 20px; height: 20px; }
.tray { margin-left: auto; display: flex; align-items: center; padding-right: 26px; }
.t-up { width: 17px; height: 10px; margin-right: 11.500px; }
.t-cloud { width: 20px; height: 18px; margin: 3px 10px 0 0; }
.t-sync { width: 20px; height: 21px; margin-right: 17px; }
.lang { width: 32px; align-items: center; letter-spacing: -.5px; margin-right: 20px; }
.t-wifi { width: 20px; height: 16px; margin-right: 10px; }
.t-vol { width: 20px; height: 18px; margin-right: 10px; }
.t-bat { width: 20px; height: 17px; margin: -2px 20px 0 0; }
.clock { width: 76px; align-items: flex-end; margin-right: 11px; top: -2px; }
.t-bell { width: 18px; height: 19px; }
```
